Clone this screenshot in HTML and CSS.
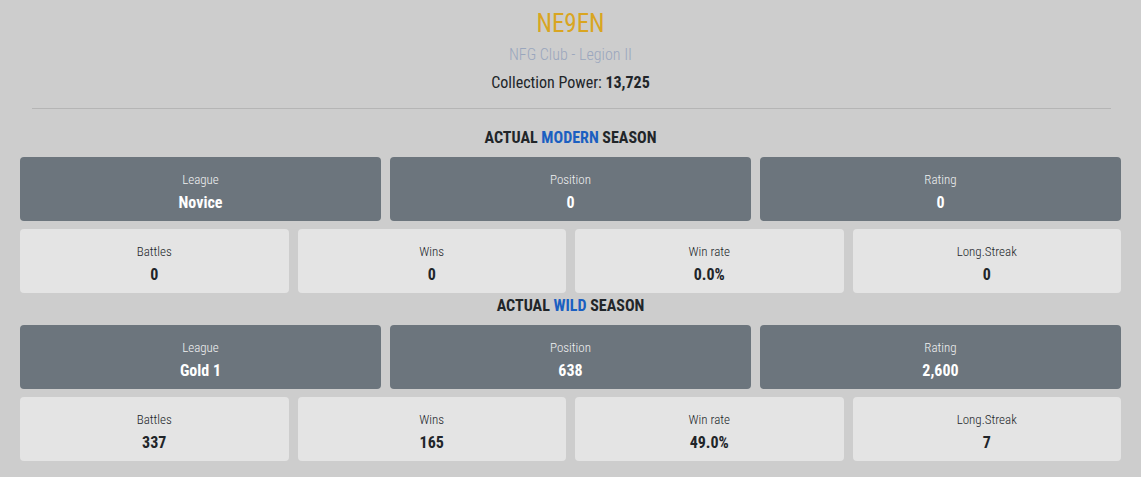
FILE: index.html
```html
<!DOCTYPE html>
<html>
<head>
<meta charset="utf-8">
<link rel="stylesheet" href="styles.css">
</head>
<body>
<div class="page">
  <header class="profile">
    <h1 class="name">NE9EN</h1>
    <div class="guild">NFG Club - Legion II</div>
    <div class="power">Collection Power: <b>13,725</b></div>
  </header>
  <hr class="divider">

  <section class="season">
    <h2 class="season-title">ACTUAL <span class="accent">MODERN</span> SEASON</h2>
    <div class="row row-3">
      <div class="card dark"><div class="label">League</div><div class="value">Novice</div></div>
      <div class="card dark"><div class="label">Position</div><div class="value">0</div></div>
      <div class="card dark"><div class="label">Rating</div><div class="value">0</div></div>
    </div>
    <div class="row row-4">
      <div class="card light"><div class="label">Battles</div><div class="value">0</div></div>
      <div class="card light"><div class="label">Wins</div><div class="value">0</div></div>
      <div class="card light"><div class="label">Win rate</div><div class="value">0.0%</div></div>
      <div class="card light"><div class="label">Long.Streak</div><div class="value">0</div></div>
    </div>
  </section>

  <section class="season">
    <h2 class="season-title">ACTUAL <span class="accent">WILD</span> SEASON</h2>
    <div class="row row-3">
      <div class="card dark"><div class="label">League</div><div class="value">Gold 1</div></div>
      <div class="card dark"><div class="label">Position</div><div class="value">638</div></div>
      <div class="card dark"><div class="label">Rating</div><div class="value">2,600</div></div>
    </div>
    <div class="row row-4">
      <div class="card light"><div class="label">Battles</div><div class="value">337</div></div>
      <div class="card light"><div class="label">Wins</div><div class="value">165</div></div>
      <div class="card light"><div class="label">Win rate</div><div class="value">49.0%</div></div>
      <div class="card light"><div class="label">Long.Streak</div><div class="value">7</div></div>
    </div>
  </section>
</div>
</body>
</html>
```

FILE: styles.css
```css
html, body {
  margin: 0;
  padding: 0;
  background: #cdcdcd;
}
body {
  font-family: "Roboto", "Liberation Sans", sans-serif;
  font-stretch: 75%;
  color: #212529;
}
.page {
  padding: 8px 20px 0 20px;
}
.profile {
  text-align: center;
}
.name {
  margin: 0;
  font-size: 25px;
  line-height: 32px;
  font-weight: normal;
  color: #d9a521;
}
.guild {
  margin-top: 4px;
  font-size: 16px;
  line-height: 22px;
  font-weight: 300;
  color: #9aa6bd;
}
.power {
  margin-top: 6px;
  font-size: 16px;
  line-height: 22px;
  color: #212529;
}
.power b {
  font-weight: bold;
}
.divider {
  margin: 14px 10px 0 12px;
  border: 0;
  border-top: 1px solid #b5b5b5;
  height: 0;
}
.season-title {
  margin: 0;
  text-align: center;
  font-size: 16px;
  line-height: 20px;
  font-weight: bold;
  color: #212529;
}
.season:first-of-type .season-title {
  margin-top: 19px;
}
.season + .season .season-title {
  margin-top: 3px;
}
.accent {
  color: #1b5fc1;
}
.row {
  display: grid;
  gap: 9px;
  margin-top: 8px;
}
.season-title + .row {
  margin-top: 9px;
}
.row-3 {
  grid-template-columns: repeat(3, 1fr);
}
.row-4 {
  grid-template-columns: repeat(4, 1fr);
}
.card {
  box-sizing: border-box;
  height: 64px;
  padding-top: 6px;
  border-radius: 4px;
  display: flex;
  flex-direction: column;
  align-items: center;
  justify-content: center;
  text-align: center;
}
.dark {
  background: #6c757d;
  color: #ffffff;
}
.light {
  background: #e4e4e4;
  color: #212529;
}
.label {
  font-size: 13px;
  line-height: 18px;
  font-weight: 300;
}
.dark .label {
  color: #f0f1f2;
}
.value {
  margin-top: 4px;
  font-size: 16px;
  line-height: 20px;
  font-weight: bold;
}
```
